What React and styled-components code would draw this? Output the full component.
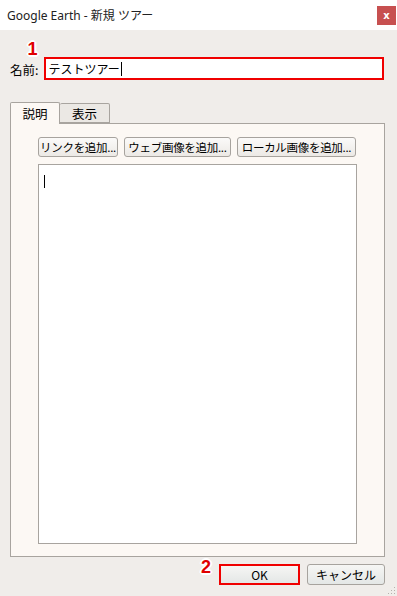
import styled, { createGlobalStyle } from "styled-components";

const GlobalStyle = createGlobalStyle`
  html, body { margin: 0; padding: 0; }
  body { font-family: "Noto Sans", "Noto Sans CJK JP", sans-serif; }
`;

const Window = styled.div`
  width: 397px;
  height: 596px;
  display: flex;
  flex-direction: column;
  background: #f0edea;
  position: relative;
  overflow: hidden;
`;

const TitleBar = styled.div`
  height: 30px;
  background: #ffffff;
  display: flex;
  align-items: center;
  justify-content: space-between;
  padding-left: 7px;
  box-sizing: border-box;
`;

const Title = styled.span`
  font-family: "Noto Sans", "Noto Sans CJK JP", sans-serif;
  font-size: 12px;
  color: #222;
`;

const CloseBox = styled.div`
  width: 19px;
  height: 19px;
  margin-right: 1px;
  background: #c75050;
  color: #fff;
  font-family: "DejaVu Sans", sans-serif;
  font-weight: bold;
  font-size: 10px;
  display: flex;
  align-items: center;
  justify-content: center;
`;

const NameRow = styled.div`
  display: flex;
  align-items: center;
  margin-top: 27px;
  padding-left: 10px;
  gap: 6px;
`;

const Label = styled.span`
  font-family: "Noto Sans CJK JP", sans-serif;
  font-size: 12.5px;
  line-height: 14px;
  margin-top: 2px;
  color: #000;
`;

const InputWrap = styled.div`
  position: relative;
`;

const NameInput = styled.div`
  width: 340px;
  height: 23px;
  box-sizing: border-box;
  border: 2px solid #f00000;
  background: #fff;
  display: flex;
  align-items: center;
  padding-left: 2px;
  font-family: "Noto Sans CJK JP", sans-serif;
  font-size: 12px;
  color: #000;
`;

const Caret = styled.span`
  display: inline-block;
  width: 1px;
  height: ${(p) => p.$h}px;
  background: #000;
  margin-left: 1px;
`;

const Badge = styled.span`
  position: absolute;
  font-family: "Liberation Sans", sans-serif;
  font-weight: bold;
  font-size: 18px;
  color: #e00000;
  line-height: 14px;
  text-shadow: -1px -1px 0 #fff, 1px -1px 0 #fff, -1px 1px 0 #fff, 1px 1px 0 #fff,
    0 2px 0 #fff, 0 -2px 0 #fff, 2px 0 0 #fff, -2px 0 0 #fff;
  left: ${(p) => p.$left}px;
  top: ${(p) => p.$top}px;
`;

const Tabs = styled.div`
  display: flex;
  align-items: flex-end;
  margin-top: 21px;
  padding-left: 10px;
  height: 22px;
`;

const Tab = styled.div`
  width: 50px;
  height: ${(p) => (p.$active ? 22 : 20)}px;
  box-sizing: border-box;
  border: 1px solid #a8a49f;
  border-bottom: ${(p) => (p.$active ? "none" : "1px solid #a8a49f")};
  border-left: ${(p) => (p.$active ? "1px solid #a8a49f" : "none")};
  border-radius: 2px 2px 0 0;
  background: ${(p) => (p.$active ? "#fcf8f4" : "#ebe8e4")};
  font-family: "Noto Sans CJK JP", sans-serif;
  font-size: 12.5px;
  color: #000;
  display: flex;
  align-items: center;
  justify-content: center;
  margin-bottom: ${(p) => (p.$active ? -1 : 0)}px;
  position: relative;
  z-index: ${(p) => (p.$active ? 1 : 0)};
`;

const Panel = styled.div`
  margin: 0 12px 0 10px;
  height: 434px;
  box-sizing: border-box;
  border: 1px solid #a8a49f;
  background: #fcf8f4;
  padding: 13px 0 0 27px;
  display: flex;
  flex-direction: column;
  gap: 7px;
`;

const ButtonRow = styled.div`
  display: flex;
  gap: 6px;
`;

const SmallButton = styled.div`
  width: ${(p) => p.$w}px;
  height: 20px;
  box-sizing: border-box;
  border: 1px solid #a7a39e;
  border-radius: 3px;
  background: linear-gradient(#fbfaf9, #ece9e5);
  font-family: "Noto Sans CJK JP", sans-serif;
  font-size: 11.5px;
  letter-spacing: -0.3px;
  color: #000;
  display: flex;
  align-items: center;
  justify-content: center;
  white-space: nowrap;
  overflow: hidden;
`;

const TextArea = styled.div`
  width: 319px;
  height: 380px;
  box-sizing: border-box;
  border: 1px solid #a8a49f;
  background: #fff;
  padding: 6px 0 0 4px;
`;

const Footer = styled.div`
  display: flex;
  justify-content: flex-end;
  gap: 7px;
  margin-top: 7px;
  padding-right: 12px;
  position: relative;
`;

const DialogButton = styled.div`
  width: ${(p) => p.$w}px;
  height: 21px;
  box-sizing: border-box;
  border: ${(p) => (p.$highlight ? "2px solid #f00000" : "1px solid #a7a39e")};
  border-radius: ${(p) => (p.$highlight ? 0 : 3)}px;
  background: linear-gradient(#f6f6f4, #e4e7e6);
  font-family: "Noto Sans CJK JP", sans-serif;
  font-size: 12px;
  color: #000;
  display: flex;
  align-items: center;
  justify-content: center;
`;

const Grip = styled.svg`
  position: absolute;
  right: 1px;
  bottom: 1px;
`;

export default function App() {
  return (
    <>
      <GlobalStyle />
      <Window>
        <TitleBar>
          <Title>Google Earth - 新規 ツアー</Title>
          <CloseBox>x</CloseBox>
        </TitleBar>

        <NameRow>
          <Label>名前:</Label>
          <InputWrap>
            <Badge $left={-17} $top={-15}>1</Badge>
            <NameInput>
              テストツアー<Caret $h={14} />
            </NameInput>
          </InputWrap>
        </NameRow>

        <Tabs>
          <Tab $active>説明</Tab>
          <Tab>表示</Tab>
        </Tabs>
        <Panel>
          <ButtonRow>
            <SmallButton $w={80}>リンクを追加...</SmallButton>
            <SmallButton $w={107}>ウェブ画像を追加...</SmallButton>
            <SmallButton $w={119}>ローカル画像を追加...</SmallButton>
          </ButtonRow>
          <TextArea>
            <Caret $h={13} />
          </TextArea>
        </Panel>

        <Footer>
          <Badge $left={201} $top={-4}>2</Badge>
          <DialogButton $w={81} $highlight>OK</DialogButton>
          <DialogButton $w={78}>キャンセル</DialogButton>
        </Footer>

        <Grip width="10" height="10" viewBox="0 0 10 10">
          {[
            [8, 0], [8, 3], [5, 3], [8, 6], [5, 6], [2, 6],
          ].map(([x, y], i) => (
            <rect key={i} x={x} y={y + 2} width="1" height="1" fill="#b5b1ac" />
          ))}
        </Grip>
      </Window>
    </>
  );
}
